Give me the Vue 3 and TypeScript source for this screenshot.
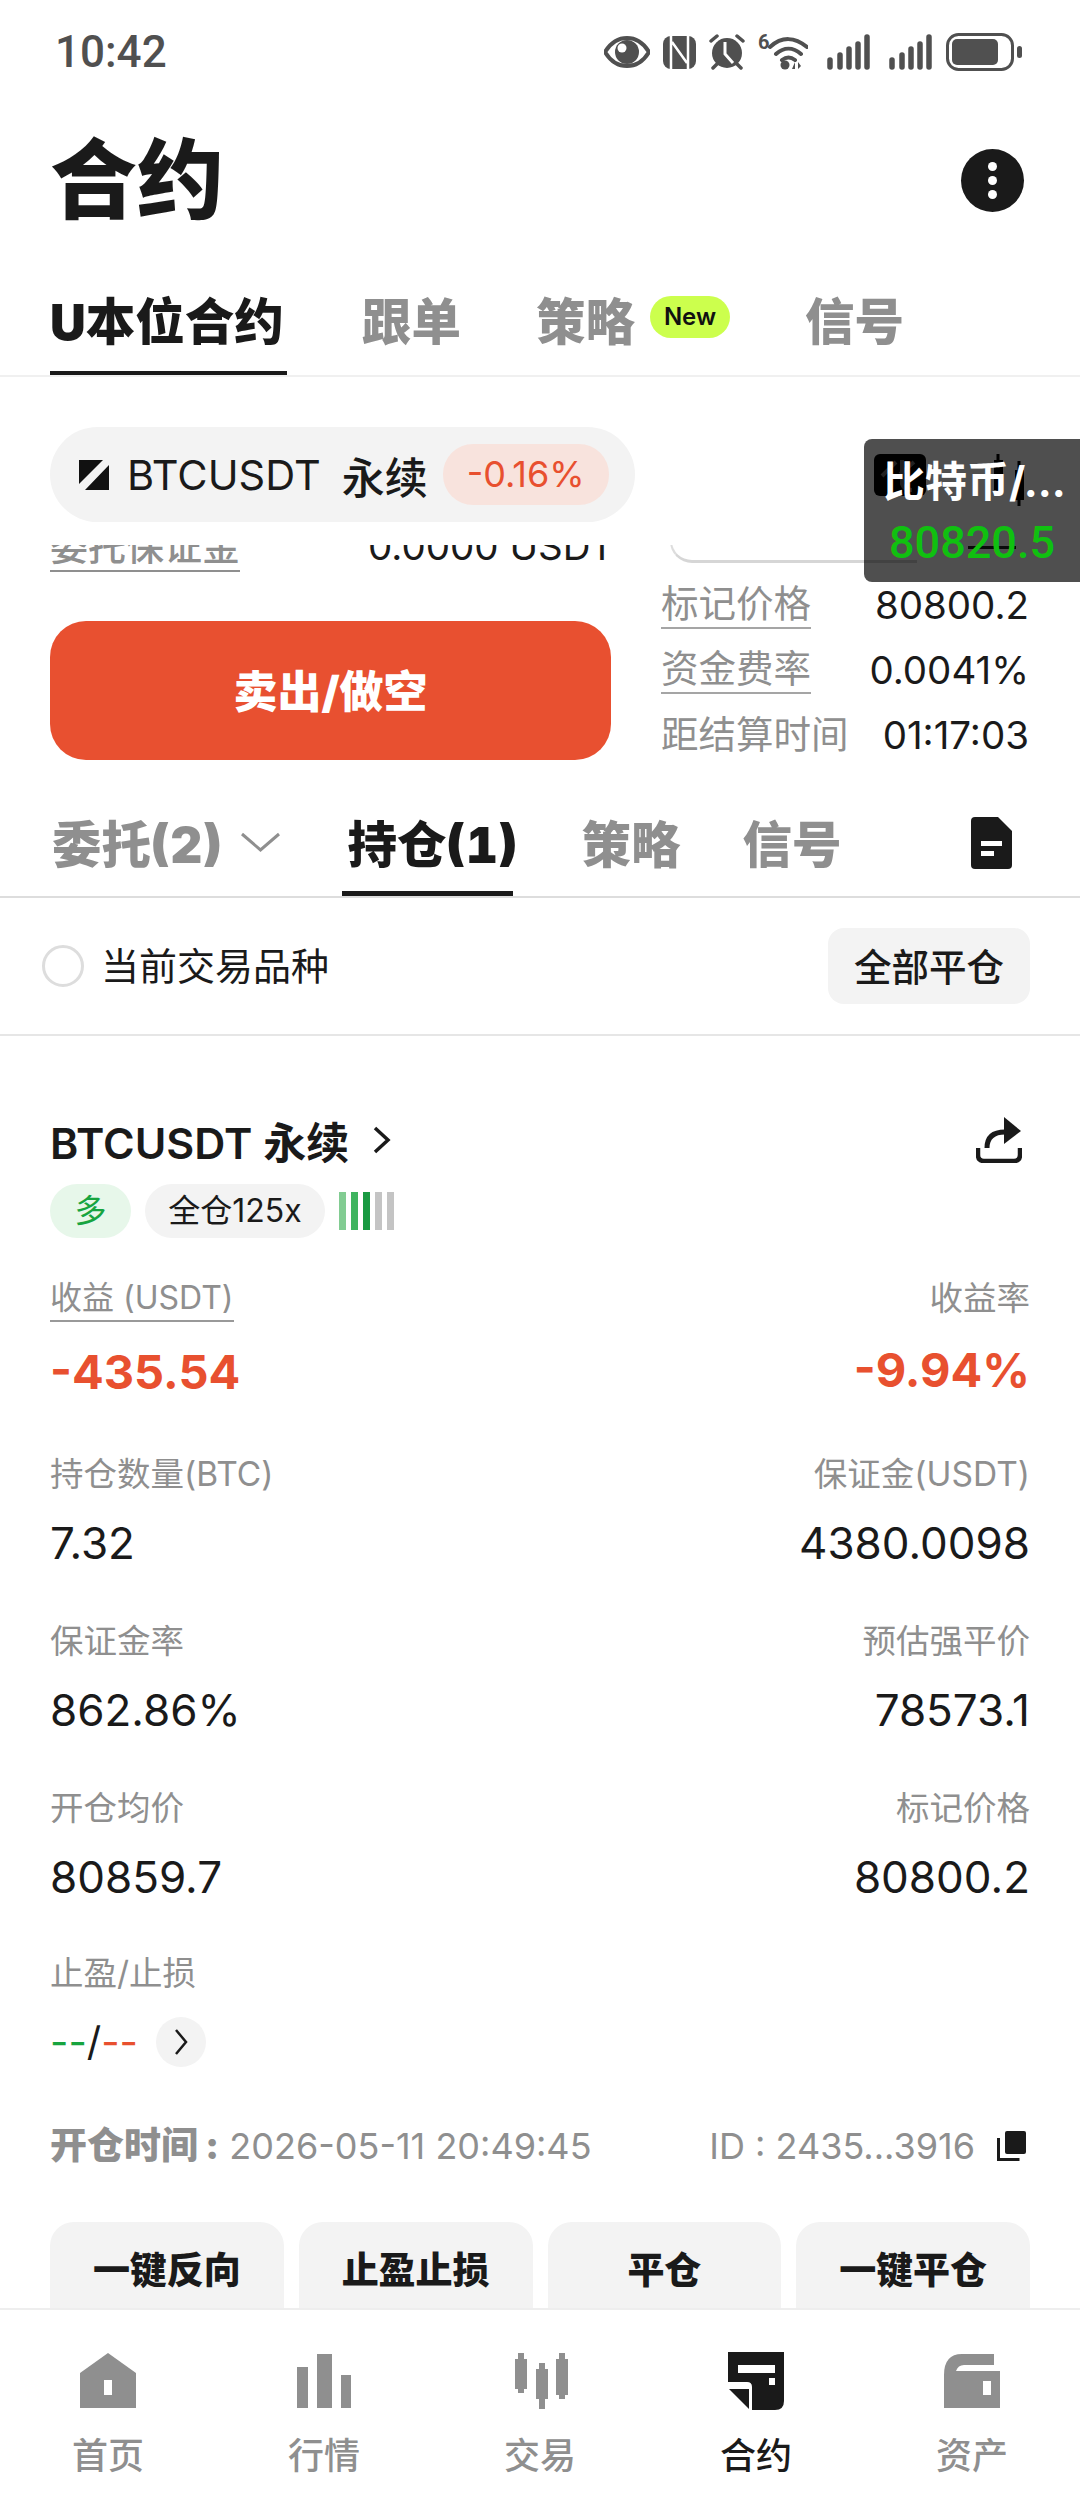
<script setup lang="ts">
const topTabs = [
  { name: 'U本位合约', active: true },
  { name: '跟单' },
  { name: '策略', badge: 'New' },
  { name: '信号' },
]

const infoRows = [
  { label: '标记价格', value: '80800.2', dashed: true },
  { label: '资金费率', value: '0.0041%', dashed: true },
  { label: '距结算时间', value: '01:17:03', dashed: false },
]

const stats = [
  { left: '持仓数量(BTC)', leftVal: '7.32', right: '保证金(USDT)', rightVal: '4380.0098' },
  { left: '保证金率', leftVal: '862.86%', right: '预估强平价', rightVal: '78573.1' },
  { left: '开仓均价', leftVal: '80859.7', right: '标记价格', rightVal: '80800.2' },
]

const actions = ['一键反向', '止盈止损', '平仓', '一键平仓']
const navItems = [
  { name: '首页', key: 'home' },
  { name: '行情', key: 'market' },
  { name: '交易', key: 'trade' },
  { name: '合约', key: 'contract' },
  { name: '资产', key: 'asset' },
]
</script>

<template>
  <div class="page">
    <div class="status">
      <span class="time">10:42</span>
      <div class="status-icons">
        <svg width="46" height="32" viewBox="0 0 46 32">
          <path d="M1 16C7 6 14 2 23 2s16 4 22 14c-6 10-13 14-22 14S7 26 1 16z" fill="none" stroke="#505050" stroke-width="4" />
          <circle cx="23" cy="16" r="12" fill="#505050" />
          <circle cx="18" cy="12" r="4.500" fill="#fff" />
        </svg>
        <svg width="33" height="33" viewBox="0 0 33 33">
          <rect width="33" height="33" rx="8" fill="#505050" />
          <path d="M8 0v33M25 0v33M9 6l15 21" fill="none" stroke="#fff" stroke-width="2.500" />
        </svg>
        <svg width="36" height="36" viewBox="0 0 36 36">
          <circle cx="18" cy="19" r="15" fill="#505050" />
          <path d="M16 8v12l8 9" fill="none" stroke="#fff" stroke-width="3" />
          <path d="M2 7l6-5M34 7l-6-5M4 34l4-4M32 34l-4-4" stroke="#505050" stroke-width="3.500" stroke-linecap="round" />
        </svg>
        <svg width="50" height="36" viewBox="0 0 50 36">
          <path d="M12 13C24 2 37 3 49 13M18 20c8-7 17-7 25 0M24 26c4-3 9-3 13 0" fill="none" stroke="#505050" stroke-width="4" stroke-linecap="round" />
          <circle cx="27" cy="31" r="4.500" fill="#505050" />
          <path d="M37 35v-7l-3 7zM40 28v7l3-3z" fill="#505050" />
          <text x="0" y="15" class="wifi-six">6</text>
        </svg>
        <svg v-for="n in 2" :key="n" class="signal" width="43" height="36" viewBox="0 0 43 36">
          <path d="M3 26v7M13 21v12M22 15v18M31 10v23M40 3v30" stroke="#505050" stroke-width="5.500" stroke-linecap="round" />
        </svg>
        <svg class="battery" width="76" height="38" viewBox="0 0 76 38">
          <rect x="1.500" y="1.500" width="65" height="35" rx="11" fill="none" stroke="#505050" stroke-width="3" />
          <rect x="6" y="6" width="46" height="26" rx="5" fill="#505050" />
          <rect x="71" y="13" width="5" height="12" rx="2.500" fill="#505050" />
        </svg>
      </div>
    </div>

    <div class="title-row">
      <h1>合约</h1>
      <span class="more"><i></i><i></i><i></i></span>
    </div>

    <div class="top-tabs">
      <div v-for="t in topTabs" :key="t.name" class="top-tab" :class="{ on: t.active }">
        {{ t.name }}
        <span v-if="t.badge" class="new">{{ t.badge }}</span>
      </div>
    </div>

    <div class="content">
      <div class="symbol-row">
        <div class="pill">
          <svg width="30" height="30" viewBox="0 0 30 30">
            <path d="M0 0h24L0 24zM30 5v25H6z" fill="#111" />
          </svg>
          <span class="pill-name">BTCUSDT</span>
          <span class="pill-type">永续</span>
          <span class="pill-rate">-0.16%</span>
        </div>
        <div class="chart-tools">
          <svg width="52" height="42" viewBox="0 0 52 42">
            <rect width="52" height="42" rx="6" fill="#000" />
            <path d="M8 22L22 8M16 16v20M28 6v24q2 6 10 6M40 8L26 20" fill="none" stroke="#6c6c6c" stroke-width="4" />
          </svg>
          <svg width="30" height="52" viewBox="0 0 30 52">
            <path d="M4 0v40M25 7v45" stroke="#000" stroke-width="3" />
            <rect x="0" y="6" width="9" height="30" fill="#000" />
            <rect x="21" y="16" width="9" height="30" fill="#000" />
          </svg>
        </div>
      </div>

      <div class="clip-row">
        <span class="clip-label">委托保证金</span>
        <span class="clip-value">0.0000 USDT</span>
        <span class="clip-card"></span>
        <span class="clip-dash"></span>
      </div>

      <div class="trade">
        <div class="sell-wrap">
          <button class="sell">卖出/做空</button>
        </div>
        <div class="info">
          <div v-for="r in infoRows" :key="r.label" class="info-row">
            <span class="info-label" :class="{ dashed: r.dashed }">{{ r.label }}</span>
            <span class="info-value">{{ r.value }}</span>
          </div>
        </div>
      </div>

      <div class="sub-tabs">
        <div class="sub-tab first">
          委托(2)
          <svg class="down" width="41" height="20" viewBox="0 0 41 20">
            <path d="M2 2l18.500 16L39 2" fill="none" stroke="#8f8f8f" stroke-width="3" />
          </svg>
        </div>
        <div class="sub-tab on">持仓(1)</div>
        <div class="sub-tab">策略</div>
        <div class="sub-tab">信号</div>
        <svg class="doc" width="41" height="52" viewBox="0 0 41 52">
          <path d="M4 0h23l14 14v34q0 4-4 4H4q-4 0-4-4V4q0-4 4-4z" fill="#1a1a1a" />
          <rect x="10" y="24" width="21" height="5" fill="#fff" />
          <rect x="10" y="34" width="13" height="5" fill="#fff" />
        </svg>
      </div>

      <div class="filter">
        <label class="check"><span class="radio"></span><span class="check-text">当前交易品种</span></label>
        <button class="close-all">全部平仓</button>
      </div>

      <div class="position">
        <div class="pos-head">
          <div class="pos-name">
            BTCUSDT 永续
            <svg width="18" height="28" viewBox="0 0 18 28">
              <path d="M2 2l13 12L2 26" fill="none" stroke="#1a1a1a" stroke-width="3.500" />
            </svg>
          </div>
          <svg width="46" height="46" viewBox="0 0 46 46">
            <path d="M2 31v7q0 6 6 6h30q6 0 6-6v-7" fill="none" stroke="#1a1a1a" stroke-width="4.500" />
            <path d="M11 31q0-16 18-16" fill="none" stroke="#1a1a1a" stroke-width="5" />
            <path d="M28 0l17 14-17 13z" fill="#1a1a1a" />
          </svg>
        </div>

        <div class="tags">
          <span class="tag long">多</span>
          <span class="tag lev">全仓125x</span>
          <span class="bars"><i class="b1"></i><i class="b2"></i><i class="b3"></i><i></i><i></i></span>
        </div>

        <div class="pnl">
          <div>
            <span class="label under">收益 (USDT)</span>
            <div class="pnl-val">-435.54</div>
          </div>
          <div class="right">
            <span class="label">收益率</span>
            <div class="pnl-val">-9.94%</div>
          </div>
        </div>

        <div v-for="s in stats" :key="s.left" class="stat">
          <div>
            <div class="label">{{ s.left }}</div>
            <div class="val">{{ s.leftVal }}</div>
          </div>
          <div class="right">
            <div class="label">{{ s.right }}</div>
            <div class="val">{{ s.rightVal }}</div>
          </div>
        </div>

        <div class="stat tp">
          <div>
            <div class="label">止盈/止损</div>
            <div class="val tp-val">
              <span class="g">--</span>/<span class="r">--</span>
              <span class="tp-go">
                <svg width="14" height="26" viewBox="0 0 14 26"><path d="M2 1l10 12L2 25" fill="none" stroke="#1a1a1a" stroke-width="2.500" /></svg>
              </span>
            </div>
          </div>
        </div>

        <div class="meta">
          <span><b>开仓时间 :</b> 2026-05-11 20:49:45</span>
          <span class="meta-id">
            ID : 2435...3916
            <svg width="29" height="30" viewBox="0 0 29 30">
              <rect x="8" y="0" width="21" height="23" rx="2" fill="#1a1a1a" />
              <path d="M1.500 7v21.500h21" fill="none" stroke="#1a1a1a" stroke-width="3" />
            </svg>
          </span>
        </div>

        <div class="actions">
          <button v-for="a in actions" :key="a">{{ a }}</button>
        </div>
      </div>

      <div class="float">
        <div class="float-name">比特币/...</div>
        <div class="float-price">80820.5</div>
      </div>
    </div>

    <nav class="nav">
      <div v-for="n in navItems" :key="n.key" class="nav-item" :class="{ on: n.key === 'contract' }">
        <svg width="60" height="60" viewBox="0 0 60 60">
          <g v-if="n.key === 'home'" fill="#8f8f8f">
            <path fill-rule="evenodd" d="M30 2l28 20v35H2V22zM26 29v15h8V29z" />
          </g>
          <g v-else-if="n.key === 'market'" fill="#8f8f8f">
            <rect x="3" y="16" width="11" height="41" />
            <rect x="23" y="3" width="15" height="54" />
            <rect x="47" y="24" width="10" height="33" />
          </g>
          <g v-else-if="n.key === 'trade'" fill="#8f8f8f">
            <rect x="5" y="8" width="12" height="30" />
            <rect x="8" y="2" width="6" height="40" />
            <rect x="26" y="18" width="12" height="30" />
            <rect x="29" y="12" width="6" height="46" />
            <rect x="46" y="8" width="12" height="36" />
            <rect x="49" y="2" width="6" height="46" />
          </g>
          <g v-else-if="n.key === 'contract'">
            <path d="M2 1h56v49q0 9-9 9H26V36q0-5-5-5H2z" fill="#1a1a1a" />
            <path d="M3 38h20v20z" fill="#1a1a1a" />
            <rect x="12" y="14" width="37" height="8" fill="#fff" />
            <rect x="43" y="27" width="6" height="7" fill="#fff" />
          </g>
          <g v-else fill="#8f8f8f">
            <path d="M2 24Q2 3 20 3h32v11H22q-6 0-8 6h44v37H2z" />
            <rect x="41" y="30" width="8" height="14" fill="#fff" />
          </g>
        </svg>
        <span>{{ n.name }}</span>
      </div>
    </nav>
  </div>
</template>

<style>
html, body {
  margin: 0;
  background: #fff;
}
</style>

<style scoped>
.page {
  width: 1080px;
  height: 2504px;
  display: flex;
  flex-direction: column;
  overflow: hidden;
  background: #fff;
  color: #1a1a1a;
  font-family: Inter, "Noto Sans CJK SC", sans-serif;
}

.status {
  height: 100px;
  flex: none;
  display: flex;
  justify-content: space-between;
  align-items: center;
  padding: 4px 58px 0 55px;
  box-sizing: border-box;
}
.time {
  font-family: Roboto, sans-serif;
  font-weight: 500;
  font-size: 44px;
  color: #505050;
}
.status-icons {
  display: flex;
  align-items: center;
  gap: 13px;
}
.wifi-six {
  font-family: Roboto, sans-serif;
  font-size: 20px;
  font-weight: 700;
  fill: #505050;
}
.signal {
  margin-left: 6px;
}
.battery {
  margin-left: 1px;
}

.title-row {
  height: 160px;
  flex: none;
  display: flex;
  justify-content: space-between;
  align-items: center;
  padding: 0 56px 0 50px;
}
h1 {
  margin: 0;
  font-size: 87px;
  font-weight: 900;
  line-height: 1;
}
.more {
  width: 63px;
  height: 63px;
  border-radius: 50%;
  background: #1a1a1a;
  display: flex;
  flex-direction: column;
  align-items: center;
  justify-content: center;
  gap: 5px;
}
.more i {
  width: 9px;
  height: 9px;
  border-radius: 50%;
  background: #fff;
}

.top-tabs {
  height: 117px;
  flex: none;
  display: flex;
  align-items: flex-end;
  gap: 75px;
  padding-left: 50px;
  border-bottom: 2px solid #f0f0f0;
  box-sizing: border-box;
}
.top-tab {
  height: 105px;
  padding-bottom: 4px;
  font-size: 49.500px;
  font-weight: 900;
  color: #8f8f8f;
  display: flex;
  align-items: center;
  box-sizing: border-box;
  border-bottom: 4px solid transparent;
}
.top-tab.on {
  width: 237px;
  white-space: nowrap;
  color: #1a1a1a;
  border-bottom-color: #1a1a1a;
}
.new {
  margin-left: 15px;
  width: 80px;
  height: 42px;
  margin-top: -4px;
  border-radius: 21px;
  background: #ccff4d;
  color: #111;
  font-size: 24px;
  font-weight: 600;
  line-height: 42px;
  text-align: center;
}

.content {
  flex: 1;
  min-height: 0;
  overflow: hidden;
  position: relative;
}
.symbol-row {
  height: 168px;
  display: flex;
  justify-content: space-between;
  align-items: flex-start;
  padding: 50px 0 0 50px;
  box-sizing: border-box;
}
.pill {
  width: 585px;
  height: 95px;
  box-sizing: border-box;
  border-radius: 48px;
  background: #f3f3f3;
  display: flex;
  align-items: center;
  padding: 0 24px 0 29px;
}
.pill-name {
  font-size: 41.500px;
  margin-left: 18px;
}
.pill-type {
  font-size: 43px;
  font-weight: 500;
  margin-left: 21px;
}
.pill-rate {
  margin-left: 15px;
  width: 166px;
  height: 61px;
  border-radius: 30px;
  background: #f8e3dd;
  color: #e8502f;
  font-size: 36px;
  line-height: 61px;
  text-align: center;
}
.chart-tools {
  display: flex;
  gap: 68px;
  margin: 27px 56px 0 0;
}

.clip-row {
  height: 27px;
  position: relative;
  overflow: hidden;
}
.clip-label {
  position: absolute;
  left: 50px;
  bottom: 0;
  font-size: 38px;
  line-height: 48px;
  font-weight: 500;
  color: #8f8f8f;
  border-bottom: 2px solid #8f8f8f;
}
.clip-value {
  position: absolute;
  left: 368px;
  bottom: 2px;
  font-size: 38.500px;
  line-height: 48px;
}
.clip-card {
  position: absolute;
  left: 670px;
  bottom: 9px;
  width: 247px;
  height: 24px;
  box-sizing: border-box;
  border-left: 2px solid #ddd;
  border-bottom: 3px solid #d6d6d6;
  border-bottom-left-radius: 22px;
}
.clip-dash {
  position: absolute;
  left: 968px;
  top: 1px;
  width: 48px;
  height: 3px;
  background: #222;
}

.trade {
  display: flex;
  justify-content: space-between;
  height: 195px;
  padding: 0 51px 0 50px;
}
.sell-wrap {
  padding-top: 49px;
}
.sell {
  display: block;
  width: 561px;
  height: 139px;
  padding-bottom: 5px;
  border: none;
  border-radius: 36px;
  background: #e85030;
  color: #fff;
  font: 900 44px Inter, "Noto Sans CJK SC", sans-serif;
}
.info {
  width: 368px;
}
.info-row {
  height: 65px;
  display: flex;
  justify-content: space-between;
  align-items: center;
}
.info-label {
  font-size: 37.500px;
  line-height: 46px;
  color: #8f8f8f;
}
.info-label.dashed {
  border-bottom: 2px solid #a5a5a5;
}
.info-value {
  font-size: 38.500px;
}

.sub-tabs {
  height: 131px;
  display: flex;
  align-items: flex-end;
  padding-left: 52px;
  position: relative;
  border-bottom: 2px solid #ddd;
  box-sizing: border-box;
}
.sub-tab {
  height: 104px;
  display: flex;
  align-items: center;
  box-sizing: border-box;
  font-size: 49.500px;
  font-weight: 900;
  font-feature-settings: "tnum";
  color: #8f8f8f;
  border-bottom: 5px solid transparent;
  margin-right: 62px;
}
.sub-tab.first {
  margin-right: 61px;
}
.sub-tab.on {
  width: 171px;
  padding-left: 6px;
  color: #1a1a1a;
  border-bottom-color: #1a1a1a;
  margin-right: 69px;
  white-space: nowrap;
}
.down {
  margin-left: 18px;
}
.doc {
  position: absolute;
  right: 68px;
  top: 50px;
}

.filter {
  height: 138px;
  display: flex;
  justify-content: space-between;
  align-items: center;
  padding: 0 50px 0 42px;
  border-bottom: 2px solid #e6e6e6;
  box-sizing: border-box;
}
.check {
  display: flex;
  align-items: center;
  font-size: 38px;
}
.check-text {
  padding-bottom: 5px;
}
.radio {
  width: 42px;
  height: 42px;
  margin-right: 17px;
  box-sizing: border-box;
  border: 3px solid #ddd;
  border-radius: 50%;
}
.close-all {
  width: 202px;
  height: 76px;
  padding-bottom: 5px;
  border: none;
  border-radius: 16px;
  background: #f3f3f3;
  color: #1a1a1a;
  font: 500 37.500px Inter, "Noto Sans CJK SC", sans-serif;
}

.position {
  padding: 80px 50px 0;
}
.pos-head {
  display: flex;
  justify-content: space-between;
  align-items: center;
  height: 48px;
  padding-right: 8px;
}
.pos-name {
  display: flex;
  align-items: center;
  gap: 24px;
  font-size: 43px;
  font-weight: 600;
}
.tags {
  display: flex;
  align-items: center;
  margin-top: 20px;
  height: 54px;
}
.tag {
  height: 54px;
  border-radius: 27px;
  font-size: 32px;
  line-height: 54px;
  text-align: center;
}
.long {
  width: 81px;
  background: #e7f7ea;
  color: #17a43f;
}
.lev {
  width: 180px;
  margin-left: 14px;
  background: #f3f3f3;
}
.bars {
  display: flex;
  gap: 5px;
  margin-left: 14px;
}
.bars i {
  width: 7px;
  height: 38px;
  background: #c4c4c4;
}
.bars .b1 {
  background: #82cc92;
}
.bars .b2 {
  background: #3fb45f;
}
.bars .b3 {
  background: #1a9a42;
}

.label {
  font-size: 33.500px;
  line-height: 44px;
  color: #8f8f8f;
}
.label.under {
  display: inline-block;
  font-size: 32px;
  border-bottom: 2px solid #999;
}
.right {
  text-align: right;
}
.pnl {
  display: flex;
  justify-content: space-between;
  margin-top: 38px;
  margin-bottom: 3px;
}
.pnl-val {
  margin-top: 20px;
  font-size: 47px;
  line-height: 60px;
  font-weight: 700;
  color: #e8502f;
}
.stat {
  display: flex;
  justify-content: space-between;
  margin-top: 46px;
}
.pnl + .stat {
  margin-top: 50px;
}
.val {
  margin-top: 17px;
  font-size: 44px;
  line-height: 60px;
}
.stat.tp {
  margin-top: 44px;
}
.tp-val {
  display: flex;
  align-items: center;
  font-size: 40px;
}
.g {
  color: #17a43f;
}
.r {
  color: #e8502f;
}
.tp-go {
  width: 50px;
  height: 50px;
  margin-left: 18px;
  border-radius: 50%;
  background: #f3f3f3;
  display: flex;
  align-items: center;
  justify-content: center;
}
.meta {
  display: flex;
  justify-content: space-between;
  align-items: center;
  margin-top: 52px;
  font-size: 36px;
  line-height: 44px;
  color: #8f8f8f;
}
.meta b {
  font-size: 37px;
  font-weight: 900;
}
.meta-id {
  display: flex;
  align-items: center;
  gap: 22px;
  padding-right: 4px;
}
.actions {
  display: grid;
  grid-template-columns: repeat(4, 1fr);
  gap: 15px;
  margin-top: 54px;
}
.actions button {
  height: 110px;
  padding-bottom: 20px;
  border: none;
  border-radius: 24px;
  background: #f3f3f3;
  color: #1a1a1a;
  font: 900 37px Inter, "Noto Sans CJK SC", sans-serif;
}

.float {
  position: absolute;
  right: 0;
  top: 62px;
  width: 216px;
  height: 143px;
  box-sizing: border-box;
  padding: 13px 0 0 19px;
  border-radius: 8px 0 0 8px;
  background: rgba(0, 0, 0, 0.69);
}
.float-name {
  font-size: 42px;
  line-height: 60px;
  font-weight: 700;
  color: #fff;
  white-space: nowrap;
}
.float-price {
  margin-top: 3px;
  font-family: Roboto, sans-serif;
  font-size: 45px;
  line-height: 56px;
  font-weight: 500;
  color: #10c010;
  padding-left: 6px;
}

.nav {
  height: 196px;
  flex: none;
  display: flex;
  box-sizing: border-box;
  border-top: 2px solid #eee;
  background: #fff;
}
.nav-item {
  flex: 1;
  display: flex;
  flex-direction: column;
  align-items: center;
  padding-top: 41px;
  font-size: 36px;
  font-weight: 500;
  color: #8f8f8f;
}
.nav-item span {
  margin-top: 20px;
  line-height: 50px;
}
.nav-item.on {
  color: #1a1a1a;
}
</style>
